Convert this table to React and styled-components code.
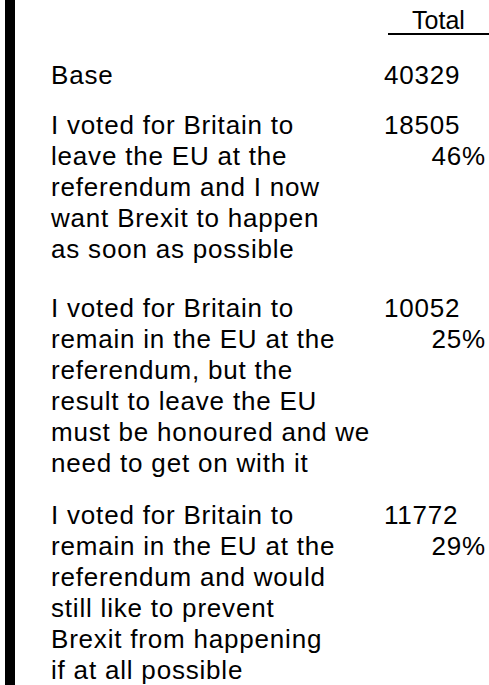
import React from "react";
import styled, { createGlobalStyle } from "styled-components";

const GlobalStyle = createGlobalStyle`
  html, body {
    margin: 0;
    padding: 0;
    background: #fff;
  }
  body {
    font-family: "Liberation Sans", Arial, sans-serif;
    color: #000;
  }
`;

const Page = styled.div`
  height: 685px;
  overflow: hidden;
  margin-left: 5px;
  border-left: 10px solid #000;
  padding-left: 36px;
  box-sizing: border-box;
`;

const Table = styled.div`
  display: grid;
  grid-template-columns: 333px 105px;
`;

const HeaderCell = styled.div`
  grid-column: 2;
  margin-left: 4px;
  padding-top: 8px;
  padding-bottom: 1px;
  font-size: 25px;
  line-height: 24px;
  text-align: center;
  border-bottom: 2px solid #000;
`;

const Label = styled.div`
  grid-column: 1;
  margin-top: ${(p) => p.$space}px;
  font-size: 26px;
  line-height: 31px;
  letter-spacing: 0.8px;
  white-space: nowrap;
`;

const Line = styled.span`
  display: block;
`;

const NumCell = styled.div`
  grid-column: 2;
  margin-top: ${(p) => p.$space}px;
  display: flex;
  flex-direction: column;
  font-size: 26px;
  line-height: 31px;
  letter-spacing: 0.8px;
  white-space: nowrap;
`;

const Count = styled.span`
  text-align: left;
`;

const Percent = styled.span`
  text-align: right;
  padding-right: 3px;
`;

const rows = [
  { space: 25, lines: ["Base"], count: "40329" },
  {
    space: 19,
    lines: [
      "I voted for Britain to",
      "leave the EU at the",
      "referendum and I now",
      "want Brexit to happen",
      "as soon as possible",
    ],
    count: "18505",
    pct: "46%",
  },
  {
    space: 28,
    lines: [
      "I voted for Britain to",
      "remain in the EU at the",
      "referendum, but the",
      "result to leave the EU",
      "must be honoured and we",
      "need to get on with it",
    ],
    count: "10052",
    pct: "25%",
  },
  {
    space: 21,
    lines: [
      "I voted for Britain to",
      "remain in the EU at the",
      "referendum and would",
      "still like to prevent",
      "Brexit from happening",
      "if at all possible",
    ],
    count: "11772",
    pct: "29%",
  },
];

function App() {
  return (
    <>
      <GlobalStyle />
      <Page>
        <Table>
          <HeaderCell>Total</HeaderCell>
          {rows.map((row, i) => (
            <React.Fragment key={i}>
              <Label $space={row.space}>
                {row.lines.map((l, j) => (
                  <Line key={j}>{l}</Line>
                ))}
              </Label>
              <NumCell $space={row.space}>
                <Count>{row.count}</Count>
                {row.pct && <Percent>{row.pct}</Percent>}
              </NumCell>
            </React.Fragment>
          ))}
        </Table>
      </Page>
    </>
  );
}

export default App;
